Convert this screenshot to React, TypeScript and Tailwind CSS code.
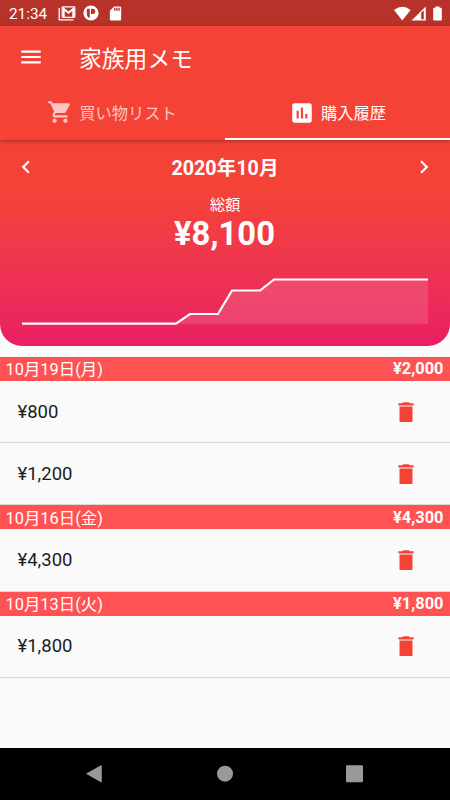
import { MdAssessment, MdChevronLeft, MdChevronRight, MdMenu, MdSdCard, MdShoppingCart } from 'react-icons/md';

const groups = [
  { date: '10月19日(月)', total: '¥2,000', items: ['¥800', '¥1,200'] },
  { date: '10月16日(金)', total: '¥4,300', items: ['¥4,300'] },
  { date: '10月13日(火)', total: '¥1,800', items: ['¥1,800'] },
];

function StatusBar() {
  return (
    <div className="flex h-[26px] items-center bg-[#b73229] pl-[9px] pr-[7px] text-white">
      <span className="w-[49px] pt-[2px] text-[15.3px] leading-[26px]">21:34</span>
      <svg className="h-[15px] w-[18px]" viewBox="0 0 18 15" fill="none" stroke="white">
        <path d="M1.2 2v11.8H15.5" strokeWidth="1.3" />
        <rect x="4.2" y="0.9" width="12.6" height="10.4" rx="0.8" strokeWidth="1.3" />
        <path d="M5.8 11V3l4.7 3.8L15.2 3v8" strokeWidth="1.8" />
      </svg>
      <svg className="ml-[7px] h-[16px] w-[16px]" viewBox="0 0 16 16">
        <circle cx="8" cy="8" r="7.6" fill="white" />
        <path d="M4.2 3.700h2.600v8.800H5.400Q3.800 11 3.800 8.500V5q0-1 .400-1.300zM8 3.700h1.700a2.600 2.600 0 0 1 0 5.200H8z" fill="#b73229" />
      </svg>
      <MdSdCard className="ml-[8px] size-[17px]" />
      <svg className="ml-auto h-[15px] w-[50px]" viewBox="0 0 50 15" fill="white">
        <path d="M9.300 14.500L1 4Q9.300-2.600 17.600 4z" />
        <path fillRule="evenodd" d="M18.500 14.500L32.800.500v14zM28.200 6.500v6.700h2.600V4.600z" />
        <path d="M42.500 1.800V.500h4v1.300h1.300q1 0 1 1v10.700q0 1-1 1h-6.600q-1 0-1-1V2.800q0-1 1-1z" />
      </svg>
    </div>
  );
}

function AppHeader() {
  return (
    <header className="relative z-10 bg-[#f44336] text-white shadow-[0_1px_4px_rgba(0,0,0,0.35)]">
      <div className="flex h-[61px] items-center pl-[18px]">
        <MdMenu className="size-[26px]" />
        <h1 className="ml-[35px] pt-[6px] text-[22.8px] leading-[30px]">家族用メモ</h1>
      </div>
      <nav className="grid h-[53px] grid-cols-2 text-[16.3px]">
        <button className="flex items-center justify-center gap-[6px] pr-[1px] text-white/70">
          <MdShoppingCart className="mb-[3px] size-[26px]" />
          <span className="pt-[1px]">買い物リスト</span>
        </button>
        <button className="flex items-center justify-center gap-[6px] border-b-2 border-white pt-[2px]">
          <MdAssessment className="mb-[2px] size-[26px]" />
          <span className="pt-[1px]">購入履歴</span>
        </button>
      </nav>
    </header>
  );
}

function Summary() {
  return (
    <section className="h-[205.500px] rounded-b-[22px] bg-linear-to-b from-[#f44336] from-25% to-[#e91e63] text-white">
      <div className="flex h-[54px] items-center justify-between px-[13px]">
        <MdChevronLeft className="size-[26px]" />
        <h2 className="pt-[3px] text-[19.7px] font-bold">2020年10月</h2>
        <MdChevronRight className="size-[26px]" />
      </div>
      <p className="pt-[1px] text-center text-[15.300px] leading-[20px]">総額</p>
      <p className="pt-[1px] pr-[1px] text-center text-[32.800px] leading-[37px] font-bold">¥8,100</p>
      <svg className="mx-auto mt-[23px] h-[52px] w-[406px]" viewBox="0 0 406 52" fill="none">
        <path d="M0 47.700H154L168 38H196L210 14.500H238L252 3.500H406V47.700z" fill="white" fillOpacity="0.13" />
        <path d="M0 47.700H154L168 38H196L210 14.500H238L252 3.500H406" stroke="white" strokeWidth="2.200" />
      </svg>
    </section>
  );
}

function TrashIcon() {
  return (
    <svg className="size-[26px]" viewBox="0 0 24 24" fill="#f44336">
      <path d="M6 7h12v13.200q0 1.100-1.200 1.100H7.200Q6 21.300 6 20.200z" />
      <path d="M5 4h3.500l1-.9h5l1 .9H19v1.900H5z" />
    </svg>
  );
}

function History() {
  return (
    <main className="mt-[11.500px] flex-1">
      {groups.map((group) => (
        <section key={group.date}>
          <div className="flex h-[24px] items-center justify-between bg-[#ff5252] pr-[6.500px] pl-[5.500px] text-[16.400px] text-white">
            <span className="pt-[3px]">{group.date}</span>
            <span className="pt-[1px] font-bold">{group.total}</span>
          </div>
          {group.items.map((item) => (
            <div
              key={item}
              className="flex h-[62.200px] items-center justify-between border-b border-[#d9d9d9] pr-[31px] pl-[17.500px] text-[18.500px] text-[#1c1c1c]"
            >
              <span className="pt-[2px]">{item}</span>
              <TrashIcon />
            </div>
          ))}
        </section>
      ))}
    </main>
  );
}

function NavigationBar() {
  return (
    <footer className="h-[52px] bg-black">
      <svg className="h-[52px] w-[450px]" viewBox="0 0 450 52" fill="#999">
        <path d="M86 25.800L100.500 17.500q1.300-.600 1.300 1v14.500q0 1.600-1.300 1z" />
        <circle cx="225" cy="25.700" r="8" />
        <rect x="346" y="17.300" width="17" height="17" rx="1" />
      </svg>
    </footer>
  );
}

export default function App() {
  return (
    <div className="flex h-[800px] w-[450px] flex-col overflow-hidden bg-[#fafafa] font-[Roboto,'Noto_Sans_CJK_JP',sans-serif]">
      <StatusBar />
      <AppHeader />
      <Summary />
      <History />
      <NavigationBar />
    </div>
  );
}
